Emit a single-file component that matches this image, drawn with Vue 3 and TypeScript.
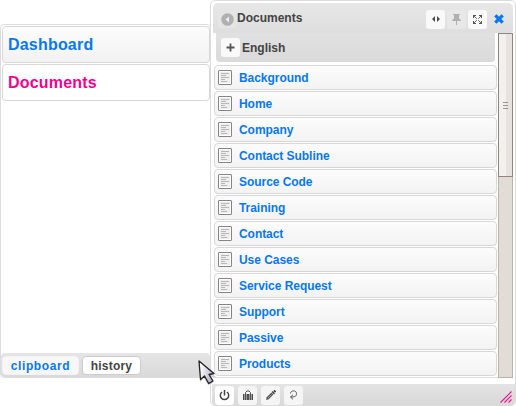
<script setup lang="ts">
import { ref } from 'vue'

const sections: string[] = ['Dashboard', 'Documents']
const activeSection = ref('Documents')
const pages: string[] = [
  'Background', 'Home', 'Company', 'Contact Subline', 'Source Code', 'Training',
  'Contact', 'Use Cases', 'Service Request', 'Support', 'Passive', 'Products',
]
</script>

<template>
  <div class="desktop">
    <aside class="sidebar">
      <nav class="sections">
        <a
          v-for="s in sections"
          :key="s"
          class="section"
          :class="{ active: s === activeSection }"
          @click="activeSection = s"
        >{{ s }}</a>
      </nav>
      <div class="tabs">
        <span class="tab clip">clipboard</span>
        <span class="tab current">history</span>
      </div>
    </aside>

    <section class="window">
      <header class="titlebar">
        <span class="btn back">
          <svg width="13" height="13" viewBox="0 0 13 13"><circle cx="6.5" cy="6.5" r="6.3" fill="#b0b0b0" /><path d="M8 3.5v6L4.5 6.5z" fill="#eee" /></svg>
        </span>
        <h1>Documents</h1>
        <div class="actions">
          <span class="btn">
            <svg width="8" height="6" viewBox="0 0 8 6"><path d="M0 3 3 0v6zM8 3 5 0v6z" fill="#4a4a4a" /></svg>
          </span>
          <span class="btn off">
            <svg width="9" height="11" viewBox="0 0 9 11"><path d="M1 0h7v1H7v4h1l1 2H5v4H4V7H0l1-2h1V1H1z" fill="#b0b0b0" /></svg>
          </span>
          <span class="btn">
            <svg width="9" height="9" viewBox="0 0 9 9" fill="none" stroke="#555"><path d="M0 .5h3M.5 0v3M6 .5h3M8.500 0v3M0 8.500h3M.5 6v3M6 8.500h3M8.500 6v3" /><path d="M1 1l2.700 2.700M8 1 5.300 3.700M1 8l2.700-2.700M8 8 5.300 5.300" stroke-width=".9" /></svg>
          </span>
          <span class="btn close">
            <svg width="10" height="10" viewBox="0 0 10 10"><path d="M1.300 1.300l7.400 7.400M8.700 1.300l-7.400 7.400" stroke="#0878ee" stroke-width="3.300" /></svg>
          </span>
        </div>
      </header>

      <div class="body">
        <div class="content">
          <div class="language">
            <span class="btn">
              <svg width="9" height="9" viewBox="0 0 9 9"><path d="M4.500 .5v8M.5 4.500h8" stroke="#555" stroke-width="1.800" /></svg>
            </span>
            <span class="name">English</span>
          </div>
          <ul class="pages">
            <li v-for="p in pages" :key="p">
              <svg width="14" height="15" viewBox="0 0 14 15">
                <rect x=".5" y=".5" width="13" height="14" rx=".5" fill="#fff" stroke="#858585" />
                <rect x="2" y="2" width="10" height="11" fill="#eee" />
                <path d="M3 3.500h8M3 5.500h5M3 7.500h8M3 9.500h4M3 11.500h6" stroke="#b8b8b8" />
              </svg>
              <a>{{ p }}</a>
            </li>
          </ul>
        </div>
        <div class="scrollbar">
          <div class="thumb"><i /><i /><i /></div>
        </div>
      </div>

      <footer class="toolbar">
        <span class="btn strong">
          <svg width="11" height="11" viewBox="0 0 11 11" fill="none" stroke="#444" stroke-width="1.500"><path d="M3 2a4.200 4.200 0 1 0 5 0M5.500 0v5.500" /></svg>
        </span>
        <span class="btn">
          <svg width="10" height="10" viewBox="0 0 10 10"><path d="M0 4h1v6H0zM2 4h1v6H2zM4 4h2v6H4zM7 4h1v6H7zM9 4h1v6H9z" fill="#4c4c4c" /><path d="M2.500 4V2.500L4 1h2l1.500 1.500V4" fill="none" stroke="#555" /><path d="M1 4h8v6H1z" fill="#555" opacity=".55" /></svg>
        </span>
        <span class="btn">
          <svg width="10" height="10" viewBox="0 0 10 10"><path d="M0 10l.7-2.700L5.400 2.600l2 2L2.700 9.300z" fill="#555" /><path d="M1.900 8.100l3.700-3.700" stroke="#aaa" stroke-width=".8" /><path d="M6 1.500l2.500 2.500M6.800 3.200 9 1M8 0l2 2" stroke="#444" stroke-width="1.200" /></svg>
        </span>
        <span class="btn">
          <svg width="9" height="10" viewBox="0 0 9 10" fill="none" stroke="#555"><path d="M1.500 3.500C1.500 0 7.500 0 7.500 3.500S5 7 1.500 7M4 4.800 1.500 7 4 9.400" /></svg>
        </span>
        <svg class="grip" width="12" height="12" viewBox="0 0 12 12"><path d="M.5 11.500l11-11M4.500 11.500l7-7M8.500 11.500l3-3" stroke="#f0148c" stroke-width="1.100" /></svg>
      </footer>
    </section>

    <svg class="pointer" width="20" height="28" viewBox="0 0 20 28">
      <defs><linearGradient id="arrow" x1="0" y1="0" x2="1" y2=".3"><stop offset=".15" stop-color="#fff" /><stop offset="1" stop-color="#b4b4c6" /></linearGradient></defs>
      <path d="M2 3v19l4-4 4 7 5-2-3-6h6z" fill="#777" opacity=".35" />
      <path d="M1 1 2.500 19.500l4-3.500 4.200 7.500 4.300-2.500-4-6.500 5-1z" fill="url(#arrow)" stroke="#222" stroke-width="1.300" stroke-linejoin="round" />
    </svg>
  </div>
</template>

<style>
body { margin: 0; background: #fff; }
</style>

<style scoped>
* { box-sizing: border-box; }
.desktop {
  position: relative;
  display: flex;
  align-items: flex-start;
  width: 516px;
  height: 406px;
  overflow: hidden;
  background: #fff;
  color: #444;
  font: bold 12px "Liberation Sans", Arial, sans-serif;
}
.sidebar {
  display: flex;
  flex-direction: column;
  justify-content: space-between;
  width: 211px;
  height: 354px;
  margin-top: 24px;
  border: 1px solid #dcdcdc;
  border-radius: 4px;
}
.sections { display: flex; flex-direction: column; gap: 1px; padding: 1px 0 0 1px; }
.section {
  height: 37px;
  padding-left: 5px;
  border: 1px solid #d8d8d8;
  border-radius: 4px;
  background: linear-gradient(#fcfcfc, #f2f2f2);
  color: #0878ee;
  font-size: 16px;
  line-height: 35px;
  letter-spacing: 0.2px;
}
.section.active { background: #fff; color: #f5008c; }
.tabs {
  display: flex;
  gap: 3px;
  height: 24px;
  padding: 3px 1px 1px;
  border-radius: 4px;
  background: linear-gradient(#e5e5e5, #d9d9d9);
}
.tab {
  height: 19px;
  border: 1px solid #f2f2f2;
  border-radius: 4px;
  background: #f7f7f7;
  color: #0878ee;
  line-height: 19px;
  text-align: center;
  width: 59px;
  letter-spacing: 0.2px;
}
.tab.clip { width: 77px; letter-spacing: 0.6px; }
.tab.current { background: #fff; border-color: #ccc; color: #444; }
.window {
  display: flex;
  flex-direction: column;
  width: 306px;
  height: 406px;
  margin-left: -1px;
  padding: 2px 1px 0 2px;
  border: 1px solid #dcdcdc;
  border-radius: 5px;
  background: #fff;
}
.titlebar {
  display: flex;
  align-items: center;
  flex: none;
  height: 30px;
  width: 300px;
  padding: 2px 5px 0 5px;
  border-radius: 5px 5px 3px 0;
  background: linear-gradient(#e7e7e7, #dedede);
}
h1 { margin: 0 0 3px 1px; font-size: 12px; line-height: 14px; }
.btn {
  display: flex;
  align-items: center;
  justify-content: center;
  flex: none;
  width: 19px;
  height: 19px;
  border-radius: 3px;
  background: #f9f9f9;
}
.back { width: 18px; height: 18px; background: #e5e5e5; }
.actions { display: flex; gap: 2px; margin-left: auto; }
.off { background: #e8e8e8; }
.close { background: transparent; }
.body { display: flex; flex: none; height: 345px; width: 300px; }
.content { width: 285px; height: 345px; padding-left: 1px; overflow: hidden; border-bottom: 1px solid #dcdcdc; }
.language {
  display: flex;
  align-items: center;
  gap: 2px;
  width: 279px;
  height: 29px;
  margin-left: 2px;
  padding: 0 0 1px 5px;
  border-radius: 0 0 4px 4px;
  background: linear-gradient(#e1e1e1, #dadada);
}
.language .name { padding-top: 1px; }
.pages { display: flex; flex-direction: column; gap: 1px; margin: 3px 0 0; padding: 0; list-style: none; }
.pages li {
  display: flex;
  align-items: center;
  gap: 7px;
  height: 25px;
  width: 283px;
  padding: 0 0 1px 3px;
  border: 1px solid #d8d8d8;
  border-radius: 4px;
  background: linear-gradient(#fcfcfc, #f3f3f3);
  color: #0878ee;
  letter-spacing: -0.05px;
}
.pages a { padding-top: 2px; }
.scrollbar { width: 15px; height: 345px; border: 1px solid #bdb2a8; background: #e1dcd6; }
.thumb {
  display: flex;
  flex-direction: column;
  align-items: flex-end;
  justify-content: center;
  gap: 2px;
  width: 15px;
  height: 144px;
  margin: -1px 0 0 -1px;
  padding-right: 4px;
  border: 1px solid #91857b;
  background: linear-gradient(90deg, #f3f1ed 7px, #e8e2df 7px);
}
.thumb i { width: 5px; height: 1px; background: #9b938d; }
.toolbar {
  display: flex;
  align-items: center;
  gap: 4px;
  flex: none;
  width: 303px;
  height: 21px;
  margin: 6px 0 0 -1px;
  padding: 1px 3px 0 3px;
  border-radius: 0 0 4px 4px;
  background: linear-gradient(#e4e4e4, #d8d8d8);
}
.toolbar .btn { background: #f5f5f5; }
.toolbar .strong { background: #fff; }
.grip { margin-left: auto; align-self: flex-end; margin-bottom: 2px; }
.pointer { position: absolute; left: 198px; top: 360px; }
</style>
